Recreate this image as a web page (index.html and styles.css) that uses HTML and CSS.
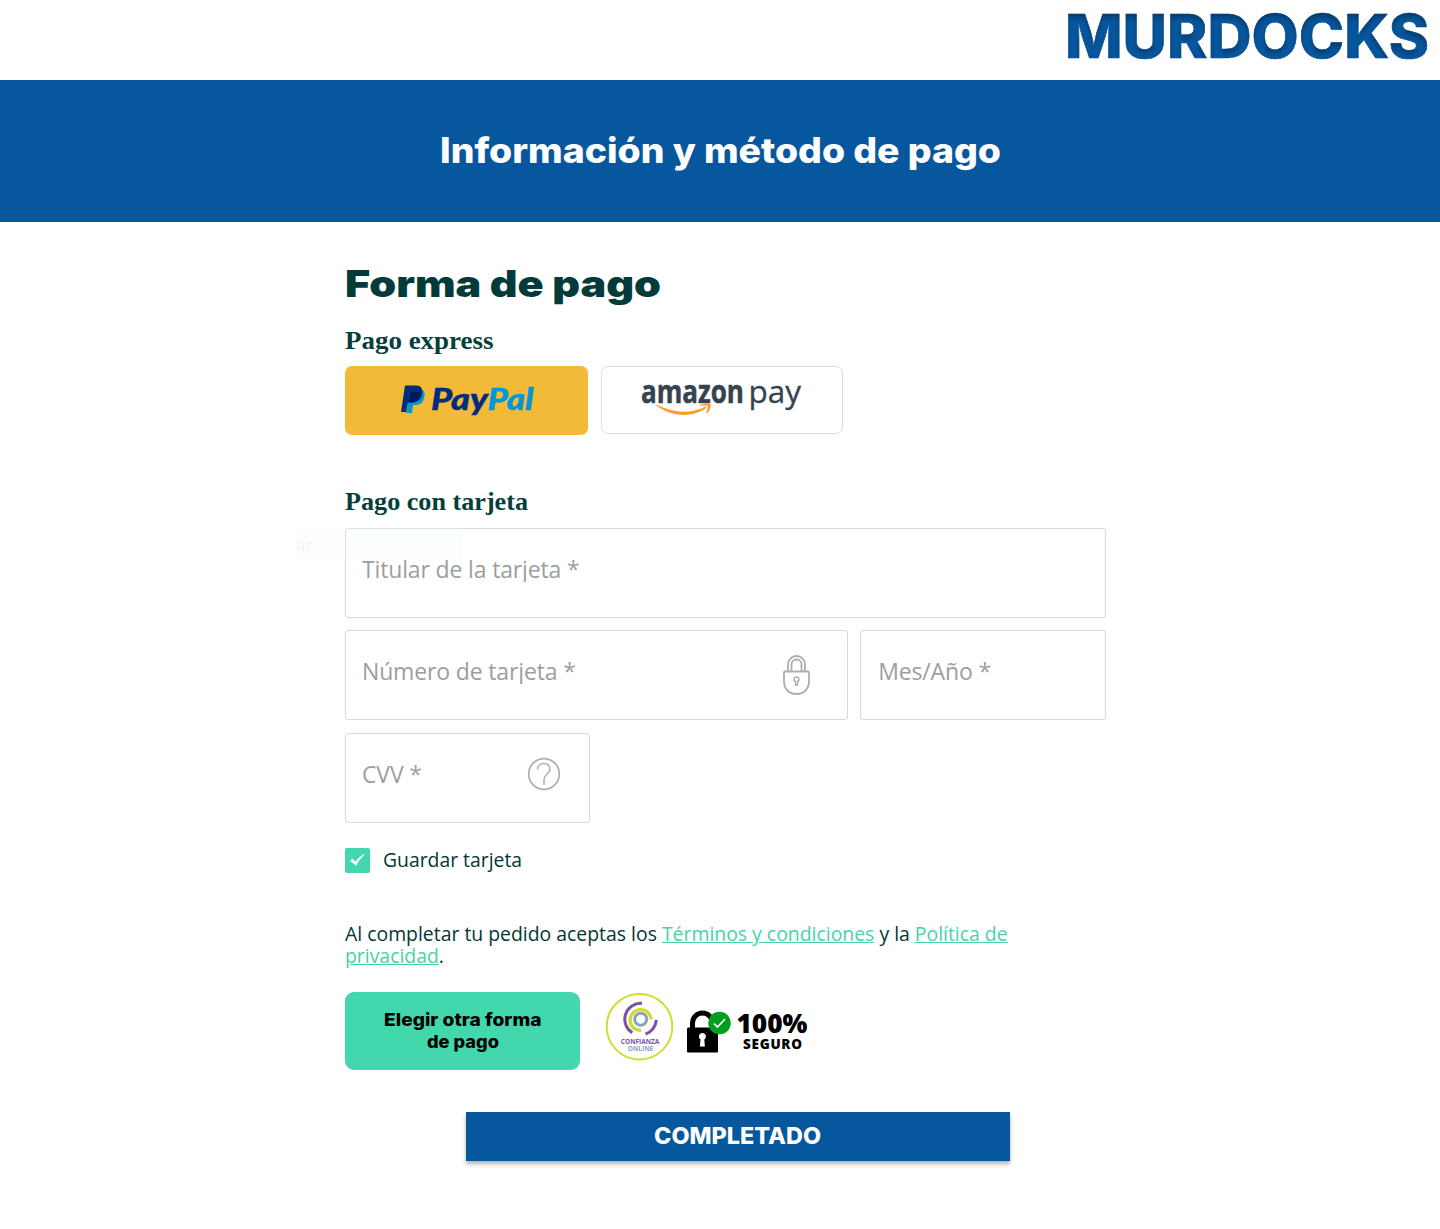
FILE: index.html
```html
<!DOCTYPE html>
<html lang="es">
<head>
<meta charset="utf-8">
<title>Información y método de pago</title>
<link rel="stylesheet" href="styles.css">
</head>
<body>
<header class="top">
  <svg class="brand" width="372" height="80" role="img" aria-label="MURDOCKS">
    <defs>
      <filter id="inset" x="-5%" y="-20%" width="110%" height="140%" color-interpolation-filters="sRGB">
        <feOffset in="SourceAlpha" dy="4"/>
        <feGaussianBlur stdDeviation="2.5" result="b"/>
        <feComposite in="SourceAlpha" in2="b" operator="out" result="s"/>
        <feFlood flood-color="#000" flood-opacity=".3"/>
        <feComposite in2="s" operator="in" result="c"/>
        <feMerge><feMergeNode in="SourceGraphic"/><feMergeNode in="c"/></feMerge>
      </filter>
    </defs>
    <text class="brand-text" x="-3" y="58" textLength="364" lengthAdjust="spacingAndGlyphs" filter="url(#inset)">MURDOCKS</text>
  </svg>
</header>
<section class="banner">
  <h1><svg width="560" height="50"><text class="banner-text" x="0" y="36" textLength="561" lengthAdjust="spacingAndGlyphs">Información y método de pago</text></svg></h1>
</section>
<main class="form">
  <h2 class="title"><svg width="340" height="50"><text class="title-text" x="0" y="37" textLength="316" lengthAdjust="spacingAndGlyphs">Forma de pago</text></svg></h2>
  <h3 class="sub"><svg width="200" height="36"><text class="sub-text" x="0" y="23.500" textLength="148.500" lengthAdjust="spacingAndGlyphs">Pago express</text></svg></h3>
  <div class="express">
    <button class="pay paypal" aria-label="PayPal">
      <svg width="243" height="69">
        <path fill="#0097d7" d="M65 27h10l3-3c2 2 2 5 1 8-1 5-4 7-9 7h-2l-1 8h-6z"/>
        <path fill="#002c80" d="M60 19.500h11c5 0 7 3 6 8-1 6-5 9-11 9h-3l-2 9.500h-5z"/>
        <path fill="#001b59" d="M66 26h9q1 0 2 .5c0 6-4 10-10 10h-3z"/>
        <text class="pp pp-dark" x="86" y="43.500" textLength="57" lengthAdjust="spacingAndGlyphs">Pay</text>
        <text class="pp pp-light" x="142.500" y="43.500" textLength="46" lengthAdjust="spacingAndGlyphs">Pal</text>
      </svg>
    </button>
    <button class="pay amazon" aria-label="amazon pay">
      <svg width="240" height="66">
        <text class="az-bold" x="39" y="35.500" textLength="103" lengthAdjust="spacingAndGlyphs">amazon</text>
        <text class="az-thin" x="146.500" y="35.500" textLength="52.500" lengthAdjust="spacingAndGlyphs">pay</text>
        <path fill="#ff9d2e" d="M54 37.300c17 9 34 10 49 2.500 1-.5 2 .5 1 1.500-15 10.500-37 8-50.500-3.500-.6-.6-.1-.8.5-.5z"/>
        <path fill="#ff9d2e" d="M98 38.200c3-2 9.500-2.400 10.500-.9.900 1.800-.7 7-3.500 9-.7.300-1.300 0-.9-.8.900-2 2.100-5.300 1.500-6.200-.8-1-4-.7-6.600-.4-.8.100-1.300-.3-1-.7z"/>
      </svg>
    </button>
  </div>
  <h3 class="sub sub-card"><svg width="200" height="36"><text class="sub-text" x="0" y="23.5" textLength="183" lengthAdjust="spacingAndGlyphs">Pago con tarjeta</text></svg></h3>
  <div class="fields">
    <div class="field holder"><span class="ph">Titular de la tarjeta *</span><span class="ghost">ar</span></div>
    <div class="line">
      <div class="field number"><span class="ph">Número de tarjeta *</span>
        <svg class="lock" width="30" height="42" fill="none" stroke="#a9b1b0" stroke-width="1.800">
          <path d="M2 17.500h24q1 0 1 1V27c0 8-5 13-12.500 13S2 35 2 27v-8.500q0-1 1-1z"/>
          <path d="M6 17v-6.500a8.500 8.500 0 0 1 17 0V17M9.500 17v-6.500a5 5 0 0 1 10 0V17"/>
          <path stroke-width="1.500" d="M13.400 27.500c-2.600-1.500-1.400-4.500 1.100-4.500s3.700 3 1.100 4.500v3.500h-2.200z"/>
        </svg>
      </div>
      <div class="field date"><span class="ph">Mes/Año *</span></div>
    </div>
    <div class="field cvv"><span class="ph">CVV *</span>
      <svg class="help" width="34" height="34" fill="none" stroke="#a9b1b0" stroke-width="1.700">
        <circle cx="17" cy="17" r="15.300"/>
        <path stroke-width="1.500" d="M10.500 12.500c0-8 12.500-8 12.500-.5 0 5-6 5-6 10.500v5.500"/>
      </svg>
    </div>
  </div>
  <label class="save">
    <svg width="25" height="25"><rect width="25" height="25" rx="2" fill="#42d7ac"/><path d="M5 12.800l2.400-2 3 2.700q3.600-5 8.600-7.500l.6.700q-5 4.300-8.600 11z" fill="#fff"/></svg>
    <span>Guardar tarjeta</span>
  </label>
  <p class="terms">Al completar tu pedido aceptas los <a href="#">Términos y condiciones</a> y la <a href="#">Política de<br>privacidad</a>.</p>
  <div class="actions">
    <button class="other" aria-label="Elegir otra forma de pago">
      <svg width="235" height="78"><text class="other-text" x="39" y="34" textLength="157.500" lengthAdjust="spacingAndGlyphs">Elegir otra forma</text><text class="other-text" x="82" y="56" textLength="72" lengthAdjust="spacingAndGlyphs">de pago</text></svg>
    </button>
    <svg class="seals" width="210" height="78">
      <circle cx="34.500" cy="34.700" r="32.800" fill="#fff" stroke="#d2dd32" stroke-width="2"/>
      <g fill="none">
        <path stroke="#7951a5" stroke-width="3" d="M37 11.300A16 16 0 0 0 27.300 40.800M51.300 27.800A15.800 15.800 0 0 1 40.500 42"/>
        <path stroke="#cddb2c" stroke-width="3.300" d="M46.300 27.300A10.700 10.700 0 0 0 25 27.300Q25.300 38 36 38.500"/>
        <circle cx="35.700" cy="27.300" r="6" stroke="#87a5b6" stroke-width="3"/>
      </g>
      <text class="seal-a" x="15.800" y="52" textLength="38.500" lengthAdjust="spacingAndGlyphs">CONFIANZA</text>
      <text class="seal-b" x="22.800" y="58.500" textLength="25.500" lengthAdjust="spacingAndGlyphs">ONLINE</text>
      <path d="M87.500 37v-6a10 10 0 0 1 20 0v6" fill="none" stroke="#000" stroke-width="5"/>
      <rect x="82" y="35.500" width="31" height="25" rx="1.200"/>
      <path fill="#fff" d="M95.500 47.500a3.500 3.500 0 1 1 3.800 0l.6 7h-5z"/>
      <circle cx="114.500" cy="31" r="11.300" fill="#00a01c"/>
      <path d="M109 31.500l3.500 3.500 7.500-8" fill="none" stroke="#fff" stroke-width="1.700"/>
      <text class="sec-a" x="131.500" y="40.500" textLength="71" lengthAdjust="spacingAndGlyphs">100%</text>
      <text class="sec-b" x="138" y="57" textLength="59" lengthAdjust="spacing">SEGURO</text>
    </svg>
  </div>
  <button class="done" aria-label="COMPLETADO"><svg width="544" height="49"><text class="done-text" x="188" y="32" textLength="167" lengthAdjust="spacingAndGlyphs">COMPLETADO</text></svg></button>
</main>
</body>
</html>
```
FILE: styles.css
```css
* { box-sizing: border-box; }
body { margin: 0; min-height: 1229px; background: #fff; color: #053634; font-family: "Open Sans", "Noto Sans", sans-serif; }
svg { display: block; overflow: visible; }
h1, h2, h3, p { margin: 0; font-size: 0; }
button { padding: 0; border: 0; font: inherit; cursor: pointer; }
.top { height: 80px; display: flex; justify-content: flex-end; }
.brand-text { font: 800 61px Inter, sans-serif; fill: #07579f; stroke: #07579f; stroke-width: .6px; }
.banner { height: 142px; background: #07579f; display: flex; justify-content: center; padding-top: 47px; }
.banner-text { font: 800 35px Inter, sans-serif; fill: #fff; }
.form { width: 761px; margin: 38px 0 0 345px; }
.title-text { font: 900 37px Inter, sans-serif; fill: #023b39; }
.sub { margin-top: 15px; }
.sub-card { margin-top: 51px; }
.sub-text { font: 700 26px "Liberation Serif", serif; fill: #053f3d; }
.express { display: flex; gap: 13px; height: 69px; margin-top: 5px; align-items: flex-start; }
.pay { border-radius: 7px; }
.paypal { width: 243px; height: 69px; background: #f3ba37; }
.amazon { width: 242px; height: 68px; background: #fff; border: 1px solid #d9e0e0; }
.pp { font: italic 900 30.500px Lato, sans-serif; }
.pp-dark { fill: #002c80; stroke: #002c80; stroke-width: .4px; }
.pp-light { fill: #0097d7; stroke: #0097d7; stroke-width: .4px; }
.az-bold { font: 700 31.500px "Open Sans", sans-serif; fill: #36424d; stroke: #36424d; stroke-width: .5px; }
.az-thin { font: 400 31.500px "Open Sans", sans-serif; fill: #36424d; stroke: #36424d; stroke-width: .3px; }
.fields { display: flex; flex-direction: column; gap: 12.400px; margin-top: 6px; }
.line { display: flex; gap: 12.500px; }
.field { position: relative; height: 90px; border: 1px solid #d3dcdb; border-radius: 3px; padding: 28px 16px 0; display: flex; justify-content: space-between; }
.number { width: 503px; padding-right: 35px; }
.date { width: 246px; padding-left: 17px; }
.cvv { width: 245px; padding-right: 28px; }
.ph { height: 25px; line-height: 25px; font-size: 23px; letter-spacing: -.15px; color: #9a9f9e; white-space: nowrap; overflow: hidden; }
.lock { margin-top: -5px; }
.help { margin-top: -5px; }
.ghost { position: absolute; left: -50px; top: -1px; width: 167px; height: 32px; line-height: 34px; font-size: 17px; color: rgba(120, 130, 140, .1); background: rgba(235, 243, 255, .2); }
.save { display: flex; gap: 13px; height: 25px; margin-top: 25.200px; font-size: 19.350px; line-height: 24px; }
.terms { margin-top: 50px; font-size: 19.400px; line-height: 22.500px; white-space: nowrap; }
.terms a { color: #48d2aa; text-decoration: underline; text-underline-offset: 1px; }
.actions { display: flex; gap: 25px; margin-top: 24px; }
.other { width: 235px; height: 78px; border-radius: 9px; background: #42d7ac; }
.other-text { font: 800 17.500px Inter, sans-serif; fill: #000; }
.seal-a { font: 700 6.500px "Open Sans", sans-serif; fill: #7951a5; }
.seal-b { font: 700 6.200px "Open Sans", sans-serif; fill: #87a5b6; }
.sec-a { font: 800 27px "Open Sans", sans-serif; }
.sec-b { font: 800 13.500px "Open Sans", sans-serif; }
.done { display: block; width: 544px; height: 49px; margin: 42px 0 0 121px; background: #07579f; box-shadow: 0 3px 4px rgba(0, 0, 0, .3); }
.done-text { font: 800 23px Inter, sans-serif; fill: #fff; }
```
